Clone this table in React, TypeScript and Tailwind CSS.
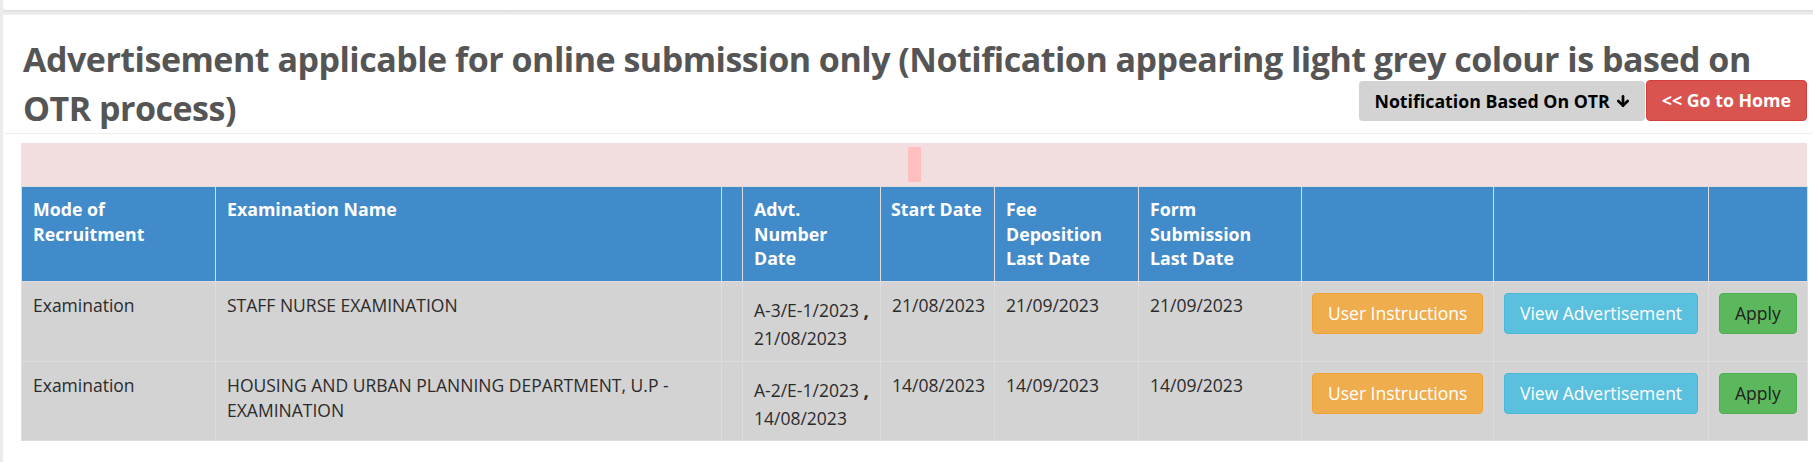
import React from 'react';
import { ArrowDown } from 'lucide-react';

type Row = {
  mode: string;
  name: string;
  advt: string;
  advtDate: string;
  start: string;
  fee: string;
  form: string;
};

const rows: Row[] = [
  {
    mode: 'Examination',
    name: 'STAFF NURSE EXAMINATION',
    advt: 'A-3/E-1/2023',
    advtDate: '21/08/2023',
    start: '21/08/2023',
    fee: '21/09/2023',
    form: '21/09/2023',
  },
  {
    mode: 'Examination',
    name: 'HOUSING AND URBAN PLANNING DEPARTMENT, U.P - EXAMINATION',
    advt: 'A-2/E-1/2023',
    advtDate: '14/08/2023',
    start: '14/08/2023',
    fee: '14/09/2023',
    form: '14/09/2023',
  },
];

const th = 'border border-[#dddddd] align-top text-left font-bold text-white text-[17.75px] leading-[24.7px] px-[11px] pt-[10px] whitespace-nowrap';
const td = 'border border-[#dddddd] align-top text-left px-[11px] pt-[11px]';
const btn = 'inline-block rounded-[4px] border px-[15px] py-[7px] text-[17.5px] leading-[24.7px] whitespace-nowrap';

export default function App() {
  return (
    <div className="w-[1813px] min-h-[462px] bg-[#ebebeb] pl-[3px] font-['Open_Sans',sans-serif] text-[17.5px] leading-[24.7px] text-[#2b2b2b]">
      <div className="h-[10px] bg-white rounded-bl-[4px]" />
      <div className="h-[5px] bg-linear-to-b from-[#dedede] to-[#f1f1f1]" />

      <div className="bg-white pb-[22px]">
        <div className="rounded-b-[4px] border-b border-[#ececec] pl-[20px] pr-[6px] pt-[20px]">
          <h3 className="text-[34px] leading-[49px] tracking-[-0.5px] font-bold text-[#555555]">
            Advertisement applicable for online submission only (Notification appearing light grey colour is based on OTR process)
            <span className="float-right mt-[-3px] flex gap-[1px] text-[17.75px] leading-[24.7px] tracking-normal">
              <button className="h-[40px] flex items-center gap-[5px] rounded-[4px] bg-[#d3d3d3] pl-[15px] pr-[14px] font-bold text-black">
                Notification Based On OTR
                <ArrowDown size={16} strokeWidth={4} />
              </button>
              <button className="h-[41px] mt-[-1px] flex items-center rounded-[4px] border border-[#d43f3a] bg-[#d9534f] px-[15px] font-bold text-white">
                &lt;&lt; Go to Home
              </button>
            </span>
          </h3>
        </div>

        <div className="ml-[18px] mr-[6px] mt-[9px]">
          <div className="h-[43px] bg-[#f2dede] flex justify-center pt-[4px]">
            <div className="w-[13px] h-[35px] bg-[#ffbfbf]" />
          </div>

          <table className="w-full table-fixed border-collapse">
            <colgroup>
              <col className="w-[194px]" />
              <col className="w-[506px]" />
              <col className="w-[21px]" />
              <col className="w-[138px]" />
              <col className="w-[114px]" />
              <col className="w-[144px]" />
              <col className="w-[163px]" />
              <col className="w-[192px]" />
              <col className="w-[215px]" />
              <col className="w-[99px]" />
            </colgroup>
            <thead>
              <tr className="h-[95px] bg-[#428bca]">
                <th className={th}>Mode of<br />Recruitment</th>
                <th className={th}>Examination Name</th>
                <th className={th}></th>
                <th className={th}>Advt.<br />Number<br />Date</th>
                <th className={`${th} !px-[10px]`}>Start Date</th>
                <th className={th}>Fee<br />Deposition<br />Last Date</th>
                <th className={th}>Form<br />Submission<br />Last Date</th>
                <th className={th}></th>
                <th className={th}></th>
                <th className={th}></th>
              </tr>
            </thead>
            <tbody>
              {rows.map((r, i) => (
                <tr key={r.advt} className={`${i === 0 ? 'h-[80px]' : 'h-[79px]'} bg-[#d3d3d3]`}>
                  <td className={td}>{r.mode}</td>
                  <td className={td}>{r.name}</td>
                  <td className={td}></td>
                  <td className={`${td} !pt-[14px] leading-[28px]`}>
                    {r.advt} <b className="text-[19px]">,</b>
                    <br />
                    {r.advtDate}
                  </td>
                  <td className={td}>{r.start}</td>
                  <td className={td}>{r.fee}</td>
                  <td className={td}>{r.form}</td>
                  <td className={`${td} !pl-[10px]`}>
                    <button className={`${btn} border-[#eea236] bg-[#f0ad4e] text-white`}>User Instructions</button>
                  </td>
                  <td className={`${td} !pl-[10px]`}>
                    <button className={`${btn} border-[#46b8da] bg-[#5bc0de] text-white`}>View Advertisement</button>
                  </td>
                  <td className={`${td} !pl-[10px]`}>
                    <button className={`${btn} border-[#4cae4c] bg-[#5cb85c] text-[#222222]`}>Apply</button>
                  </td>
                </tr>
              ))}
            </tbody>
          </table>
        </div>
      </div>
    </div>
  );
}
